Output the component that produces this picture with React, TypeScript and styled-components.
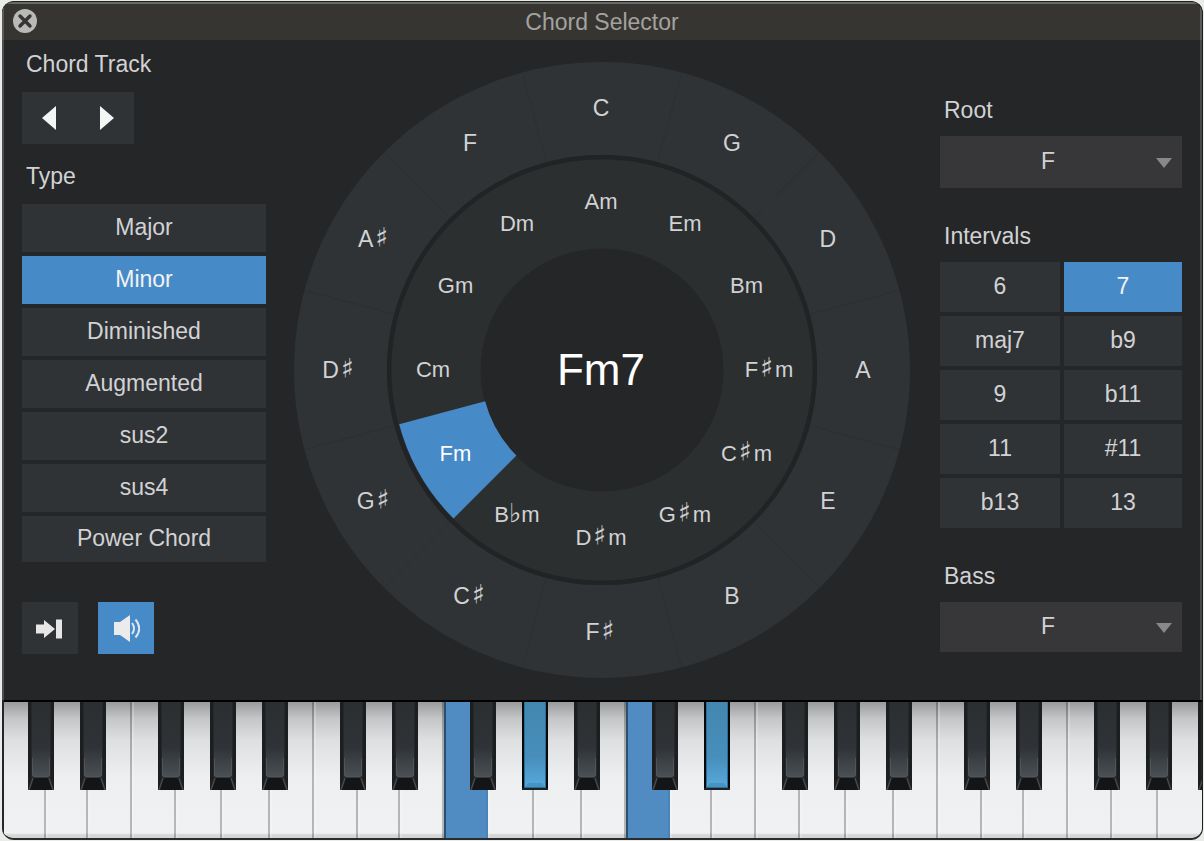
import React, { useState } from 'react';
import styled, { createGlobalStyle, css } from 'styled-components';

const blue = '#468ac8';
const panel = '#2f3336';
const ink = '#d2d2d4';

const GlobalStyle = createGlobalStyle`
  *, *::before, *::after { box-sizing: border-box; }
  body {
    margin: 0;
    padding: 1px 1px 1px 2px;
    background: #e9ece9;
    color: ${ink};
    font: 23px/28px "Liberation Sans", Arial, sans-serif;
  }
  button, select { font: inherit; color: inherit; border: 0; padding: 0; margin: 0; border-radius: 0; cursor: pointer; }
`;

const Window = styled.main`
  overflow: hidden;
  border: 1px solid #1c1f1e;
  border-left-width: 0;
  border-bottom: 2px solid #2b2b2c;
  border-radius: 12px;
  background: #252628;
`;

const TitleBar = styled.header`
  display: grid;
  grid-template-columns: 36px 1fr 36px;
  align-items: center;
  height: 38px;
  border-top: 2px solid #6a6b67;
  border-left: 2px solid #5b5c59;
  border-right: 2px solid #5b5c59;
  background: #373532;
`;

const Title = styled.h1`
  margin: 0;
  font-size: 23px;
  line-height: 28px;
  font-weight: 400;
  text-align: center;
  color: #a3a29f;
`;

const CloseButton = styled.button`
  display: flex;
  margin-left: 8px;
  width: 26px;
  height: 26px;
  background: none;
`;

const Body = styled.div`
  display: flex;
  align-items: flex-start;
  justify-content: space-between;
  height: 660px;
  padding: 0 18px;
  border-left: 2px solid #4c5052;
  border-right: 2px solid #47484a;
`;

const Side = styled.section<{ $width: number; $top: number }>`
  flex: 0 0 ${p => p.$width}px;
  display: flex;
  flex-direction: column;
  padding-top: ${p => p.$top}px;
`;

const Caption = styled.h2`
  margin: 0;
  padding-left: 4px;
  font-size: 23px;
  line-height: 28px;
  font-weight: 400;
`;

const CaptionLabel = styled.label`
  padding-left: 4px;
`;

const NavGroup = styled.div`
  display: flex;
  width: 112px;
  margin: 14px 0 18px;
`;

const NavButton = styled.button`
  display: flex;
  align-items: center;
  justify-content: center;
  width: 56px;
  height: 52px;
  background: ${panel};
  &:first-child { padding-right: 2px; }
  &:last-child { padding-left: 2px; }
`;

const TypeList = styled.div`
  display: flex;
  flex-direction: column;
  gap: 4px;
  margin-top: 14px;
`;

const Choice = styled.button<{ $on: boolean }>`
  height: 50px;
  padding-bottom: 2px;
  background: ${p => (p.$on ? blue : panel)};
  color: ${p => (p.$on ? '#f2f2f2' : ink)};
`;

const TypeChoice = styled(Choice)`
  height: 48px;
  &:last-child { height: 46px; }
`;

const Tools = styled.div`
  display: flex;
  gap: 20px;
  margin-top: 40px;
`;

const ToolButton = styled.button<{ $on: boolean }>`
  display: flex;
  align-items: center;
  justify-content: center;
  width: 56px;
  height: 52px;
  background: ${p => (p.$on ? blue : panel)};
`;

const IntervalGrid = styled.div`
  display: grid;
  grid-template-columns: 120px 1fr;
  gap: 4px;
  margin: 12px 0 34px;
`;

const SelectBox = styled.div<{ $height: number }>`
  position: relative;
  height: ${p => p.$height}px;
  margin-top: 12px;
  background: #373739;
`;

const Select = styled.select`
  appearance: none;
  width: 100%;
  height: 100%;
  padding: 0 26px 2px 0;
  background: transparent;
  text-align: center;
  text-align-last: center;
`;

const SelectArrow = styled.svg`
  position: absolute;
  right: 10px;
  top: 50%;
  margin-top: -4px;
  pointer-events: none;
`;

const Gap = styled.div`
  height: 34px;
`;

const Wheel = styled.section`
  position: relative;
  flex: 0 1 616px;
  margin: 22px 2px 0 0;
  aspect-ratio: 1;
`;

const WheelArt = styled.svg`
  display: block;
  width: 100%;
  height: 100%;
`;

const WheelLabel = styled.button<{ $x: number; $y: number; $inner: boolean; $on: boolean }>`
  position: absolute;
  left: ${p => p.$x}%;
  top: ${p => p.$y}%;
  transform: translate(-50%, -50%);
  display: flex;
  align-items: center;
  justify-content: center;
  min-width: 64px;
  height: 36px;
  padding: 0 2px 1px 0;
  background: none;
  white-space: nowrap;
  font-size: ${p => (p.$inner ? 22 : 23)}px;
  color: ${p => (p.$on ? '#fff' : ink)};
`;

const Accidental = styled.span`
  font-family: "DejaVu Sans Mono", "DejaVu Sans", monospace;
  font-size: 28px;
  line-height: 0;
`;

const Flat = styled(Accidental)`
  font-family: "DejaVu Sans", sans-serif;
  font-size: 26px;
`;

const ChordName = styled.output`
  position: absolute;
  left: 50%;
  top: 50%;
  transform: translate(-50%, -50%);
  padding-right: 2px;
  font-size: 44px;
  line-height: 52px;
  color: #fff;
`;

const Piano = styled.section`
  overflow: hidden;
  margin-left: 2px;
  border-top: 2px solid #000;
`;

const KeyRow = styled.div`
  display: flex;
  height: 136px;
  margin-left: -2px;
`;

const Octave = styled.div`
  position: relative;
  display: flex;
  flex: 0 0 312px;
`;

const WhiteKey = styled.button<{ $width: number; $on: boolean }>`
  flex: 0 0 ${p => p.$width}px;
  background:
    linear-gradient(transparent 131px, #d5d5d6 133px),
    linear-gradient(#999a9b, #c4c5c6 16px, #dedfe0 38px, #eeeff1 76px, #f0f1f3);
  border-left: 2px solid rgba(255, 255, 255, 0.2);
  border-right: 2px solid rgba(0, 0, 0, 0.24);
  background-origin: border-box;
  ${p => p.$on && css`
    background: #508cc1;
    border-left-color: #2b506f;
    border-right-color: #4a83b8;
  `}
`;

const BlackKey = styled.button<{ $left: number }>`
  position: absolute;
  top: 0;
  left: ${p => p.$left}px;
  width: 26px;
  height: 88px;
  background: #17181a;
`;

const KeyArt = styled.svg`
  display: block;
`;

const GradientDefs = styled.svg`
  display: block;
  width: 0;
  height: 0;
`;

const TYPES = ['Major', 'Minor', 'Diminished', 'Augmented', 'sus2', 'sus4', 'Power Chord'];
const INTERVALS = ['6', '7', 'maj7', 'b9', '9', 'b11', '11', '#11', 'b13', '13'];
const OUTER = ['C', 'G', 'D', 'A', 'E', 'B', 'F♯', 'C♯', 'G♯', 'D♯', 'A♯', 'F'];
const INNER = ['Am', 'Em', 'Bm', 'F♯m', 'C♯m', 'G♯m', 'D♯m', 'B♭m', 'Fm', 'Cm', 'Gm', 'Dm'];
const ROOTS = ['F', 'C', 'C♯', 'D', 'D♯', 'E', 'F♯', 'G', 'G♯', 'A', 'A♯', 'B'];

const WHITE = [
  { name: 'C', width: 44 },
  { name: 'D', width: 42 },
  { name: 'E', width: 44 },
  { name: 'F', width: 44 },
  { name: 'G', width: 46 },
  { name: 'A', width: 48 },
  { name: 'B', width: 44 },
];
const BLACK = [
  { name: 'C♯', left: 26 },
  { name: 'D♯', left: 78 },
  { name: 'F♯', left: 156 },
  { name: 'G♯', left: 208 },
  { name: 'A♯', left: 260 },
];
const SOUNDING = new Set(['F2', 'G♯2', 'C3', 'D♯3']);

const CENTER = 308;

function polar(radius: number, degrees: number): [number, number] {
  const a = ((degrees - 90) * Math.PI) / 180;
  return [CENTER + radius * Math.cos(a), CENTER + radius * Math.sin(a)];
}

function slice(r1: number, r2: number, mid: number) {
  const [ax, ay] = polar(r2, mid - 15);
  const [bx, by] = polar(r2, mid + 15);
  const [cx, cy] = polar(r1, mid + 15);
  const [dx, dy] = polar(r1, mid - 15);
  return `M${ax} ${ay}A${r2} ${r2} 0 0 1 ${bx} ${by}L${cx} ${cy}A${r1} ${r1} 0 0 0 ${dx} ${dy}Z`;
}

function spoke(degrees: number) {
  return `M${polar(215, degrees).join(' ')}L${polar(308, degrees).join(' ')}`;
}

function ChordText({ name }: { name: string }) {
  return (
    <span>
      {name.split(/([♯♭])/).map((part, i) => {
        if (part === '♯') return <Accidental key={i}>{part}</Accidental>;
        if (part === '♭') return <Flat key={i}>{part}</Flat>;
        return part;
      })}
    </span>
  );
}

function ChordWheel({ minor, onMinor }: { minor: string; onMinor: (name: string) => void }) {
  return (
    <Wheel aria-label="Circle of fifths">
      <WheelArt viewBox="0 0 616 616" aria-hidden="true">
        <circle cx={CENTER} cy={CENTER} r="261.5" fill="none" stroke={panel} strokeWidth="93" />
        {OUTER.map((name, i) => (
          <path key={name} d={spoke(i * 30 + 15)} stroke="#2b2f31" strokeWidth="1" />
        ))}
        <circle cx={CENTER} cy={CENTER} r="213" fill="none" stroke="#222325" strokeWidth="4" />
        <circle cx={CENTER} cy={CENTER} r="166" fill="none" stroke="#2c2f30" strokeWidth="89" />
        {INNER.map((name, i) =>
          name === minor ? <path key={name} d={slice(121, 210, i * 30)} fill={blue} /> : null,
        )}
      </WheelArt>
      {OUTER.map((name, i) => {
        const [x, y] = polar(262, i * 30);
        return (
          <WheelLabel key={name} type="button" $x={x / 6.16} $y={y / 6.16} $inner={false} $on={false}>
            <ChordText name={name} />
          </WheelLabel>
        );
      })}
      {INNER.map((name, i) => {
        const [x, y] = polar(168, i * 30);
        return (
          <WheelLabel
            key={name}
            type="button"
            $x={x / 6.16}
            $y={y / 6.16}
            $inner
            $on={name === minor}
            onClick={() => onMinor(name)}
          >
            <ChordText name={name} />
          </WheelLabel>
        );
      })}
      <ChordName>{minor}7</ChordName>
    </Wheel>
  );
}

function BlackKeyArt({ on }: { on: boolean }) {
  if (on) {
    return (
      <KeyArt width="26" height="88" viewBox="0 0 26 88" aria-hidden="true">
        <rect width="26" height="88" fill="#06090c" />
        <rect x="2" width="22" height="86" fill="#2d6c94" />
        <rect x="3" width="20" height="85" fill="url(#litKey)" />
        <path d="M3 85L6 81H20L23 85Z" fill="#4793c2" />
        <path d="M0 86H26V88H0Z" fill="#1c2226" />
      </KeyArt>
    );
  }
  return (
    <KeyArt width="26" height="88" viewBox="0 0 26 88" aria-hidden="true">
      <rect width="26" height="88" fill="#1c1e20" />
      <path d="M3 0H23V76H3Z" fill="#24282a" />
      <path d="M4 0H22V72Q22 75 19 75H7Q4 75 4 72Z" fill="url(#darkKey)" />
      <path d="M4.500 56V72Q4.500 75 7 75H19Q21.500 75 21.500 72V56" fill="none" stroke="#596066" strokeOpacity="0.6" />
      <path d="M6 76H20L24 88H2Z" fill="#141517" />
      <path d="M5 76L1 88M21 76L25 88" stroke="#45494c" strokeWidth="1.5" />
    </KeyArt>
  );
}

function Keyboard() {
  return (
    <Piano aria-label="Keyboard">
      <GradientDefs aria-hidden="true">
        <defs>
          <linearGradient id="darkKey" x1="0" y1="0" x2="0" y2="1">
            <stop offset="0" stopColor="#2b2f31" />
            <stop offset="0.6" stopColor="#2f3337" />
            <stop offset="1" stopColor="#4b5055" />
          </linearGradient>
          <linearGradient id="litKey" x1="0" y1="0" x2="0" y2="1">
            <stop offset="0" stopColor="#4287b0" />
            <stop offset="0.65" stopColor="#478ebb" />
            <stop offset="1" stopColor="#58a9dc" />
          </linearGradient>
        </defs>
      </GradientDefs>
      <KeyRow>
        {[1, 2, 3, 4, 5, 6].map(octave => (
          <Octave key={octave}>
            {WHITE.map(k => (
              <WhiteKey
                key={k.name}
                type="button"
                aria-label={k.name + octave}
                $width={k.width}
                $on={SOUNDING.has(k.name + octave)}
              />
            ))}
            {BLACK.map(k => (
              <BlackKey key={k.name} type="button" aria-label={k.name + octave} $left={k.left}>
                <BlackKeyArt on={SOUNDING.has(k.name + octave)} />
              </BlackKey>
            ))}
          </Octave>
        ))}
      </KeyRow>
    </Piano>
  );
}

function NoteSelect({ id, height }: { id: string; height: number }) {
  return (
    <SelectBox $height={height}>
      <Select id={id} defaultValue="F">
        {ROOTS.map(n => (
          <option key={n}>{n}</option>
        ))}
      </Select>
      <SelectArrow width="16" height="10" viewBox="0 0 16 10" aria-hidden="true">
        <path d="M0 0H16L8 10Z" fill="#88888a" />
      </SelectArrow>
    </SelectBox>
  );
}

export default function App() {
  const [type, setType] = useState('Minor');
  const [interval, setInterval] = useState('7');
  const [minor, setMinor] = useState('Fm');
  const [audition, setAudition] = useState(true);

  return (
    <>
      <GlobalStyle />
      <Window>
        <TitleBar>
          <CloseButton type="button" aria-label="Close">
            <svg width="26" height="26" viewBox="0 0 26 26" aria-hidden="true">
              <circle cx="13" cy="12" r="12" fill="#b9b9b8" />
              <path d="M8 7L18 17M18 7L8 17" stroke="#373532" strokeWidth="3.4" strokeLinecap="round" />
            </svg>
          </CloseButton>
          <Title>Chord Selector</Title>
        </TitleBar>
        <Body>
          <Side $width={244} $top={10}>
            <Caption>Chord Track</Caption>
            <NavGroup>
              <NavButton type="button" aria-label="Previous chord">
                <svg width="14" height="24" viewBox="0 0 14 24" aria-hidden="true">
                  <path d="M14 0V24L0 12Z" fill="#f4f5f5" />
                </svg>
              </NavButton>
              <NavButton type="button" aria-label="Next chord">
                <svg width="14" height="24" viewBox="0 0 14 24" aria-hidden="true">
                  <path d="M0 0V24L14 12Z" fill="#f4f5f5" />
                </svg>
              </NavButton>
            </NavGroup>
            <Caption>Type</Caption>
            <TypeList>
              {TYPES.map(t => (
                <TypeChoice key={t} type="button" $on={t === type} onClick={() => setType(t)}>
                  {t}
                </TypeChoice>
              ))}
            </TypeList>
            <Tools>
              <ToolButton type="button" $on={false} aria-label="Advance to next chord">
                <svg width="28" height="22" viewBox="0 0 28 22" aria-hidden="true">
                  <path d="M0 7.500H8V3L19 12L8 21V16.500H0ZM20 2.500H26V21.500H20Z" fill="#e6e6e6" />
                </svg>
              </ToolButton>
              <ToolButton type="button" $on={audition} aria-label="Audition chords" onClick={() => setAudition(!audition)}>
                <svg width="28" height="28" viewBox="0 0 28 28" aria-hidden="true">
                  <path d="M2 8H8L18 1V28L8 21H2Z" fill="#ebebeb" />
                  <path d="M20 9Q24 14.500 20 20M23.500 5.500Q31 14.500 23.500 23.500" fill="none" stroke="#dfe7ee" strokeWidth="2" />
                </svg>
              </ToolButton>
            </Tools>
          </Side>
          <ChordWheel minor={minor} onMinor={setMinor} />
          <Side $width={242} $top={56}>
            <CaptionLabel htmlFor="root">Root</CaptionLabel>
            <NoteSelect id="root" height={52} />
            <Gap />
            <Caption>Intervals</Caption>
            <IntervalGrid>
              {INTERVALS.map(n => (
                <Choice key={n} type="button" $on={n === interval} onClick={() => setInterval(n)}>
                  {n}
                </Choice>
              ))}
            </IntervalGrid>
            <CaptionLabel htmlFor="bass">Bass</CaptionLabel>
            <NoteSelect id="bass" height={50} />
          </Side>
        </Body>
        <Keyboard />
      </Window>
    </>
  );
}
